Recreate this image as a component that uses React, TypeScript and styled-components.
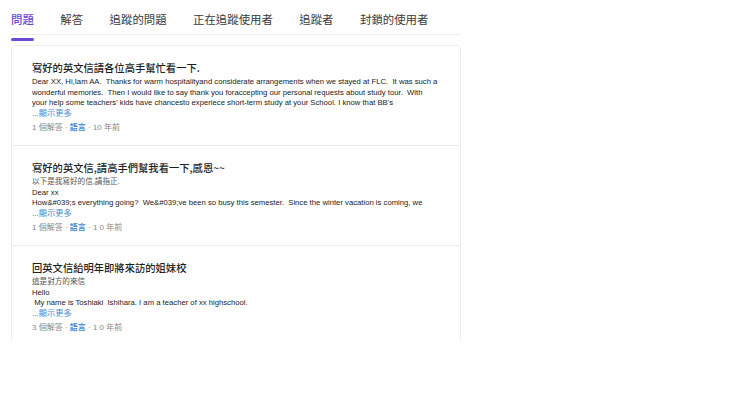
import React from "react";
import styled, { createGlobalStyle } from "styled-components";

const Global = createGlobalStyle`
  html, body { margin: 0; padding: 0; background: #fff; }
  body { font-family: "Liberation Sans", Arial, "Noto Sans CJK TC", sans-serif; }
`;

const Page = styled.div`
  width: 450px;
  padding: 10px 0 0 11px;
`;

const Tabs = styled.nav`
  display: flex;
  gap: 26.5px;
  border-bottom: 1px solid #eceef2;
  height: 24px;
`;

const Tab = styled.div<{ $active?: boolean }>`
  position: relative;
  font-family: "Noto Sans CJK TC", sans-serif;
  font-size: 11.4px;
  line-height: 18px;
  color: ${(p) => (p.$active ? "#6b4bd6" : "#3a3a3a")};
  font-weight: ${(p) => (p.$active ? 500 : 400)};
  &::after {
    content: "";
    display: ${(p) => (p.$active ? "block" : "none")};
    position: absolute;
    left: 0;
    right: 0;
    bottom: -7px;
    height: 3px;
    border-radius: 2px;
    background: #6b4bd6;
  }
`;

const Card = styled.section`
  margin-top: 10px;
  height: 295px;
  overflow: hidden;
  border: 1px solid #ececec;
  border-bottom: none;
  border-radius: 5px 5px 0 0;
`;

const Item = styled.article`
  padding: 14px 12px 0 20px;
  height: 100px;
  border-bottom: 1px solid #ececec;
  box-sizing: border-box;
`;

const Title = styled.h3`
  margin: 0 0 1px;
  font-family: "Noto Sans CJK TC", sans-serif;
  font-size: 10.3px;
  line-height: 16px;
  font-weight: 500;
  color: #1f1f1f;
`;

const Body = styled.div`
  font-family: "Liberation Sans", Arial, "Noto Sans CJK TC", sans-serif;
  font-size: 7.7px;
  line-height: 10.5px;
  color: #222;
  white-space: pre;
`;

const CjkLine = styled.span`
  font-size: 7.6px;
  color: #555;
`;

const More = styled.a`
  display: block;
  font-size: 8.2px;
  line-height: 10.4px;
  color: #4a8ad0;
  text-decoration: none;
  font-family: "Liberation Sans", "Noto Sans CJK TC", sans-serif;
`;

const Meta = styled.div`
  margin-top: 3px;
  font-family: "Liberation Sans", "Noto Sans CJK TC", sans-serif;
  font-size: 8px;
  line-height: 12px;
  color: #8a8a8a;
`;

const Lang = styled.span`
  color: #4a8ad0;
  font-weight: 700;
`;

type Q = {
  title: string;
  cjk?: string;
  body: string;
  answers: string;
  ago: string;
};

const items: Q[] = [
  {
    title: "寫好的英文信請各位高手幫忙看一下.",
    body:
      "Dear XX, Hi,Iam AA.  Thanks for warm hospitalityand considerate arrangements when we stayed at FLC.  It was such a\nwonderful memories.  Then I would like to say thank you foraccepting our personal requests about study tour.  With\nyour help some teachers' kids have chancesto experiece short-term study at your School. I know that BB's",
    answers: "1 個解答",
    ago: "10 年前",
  },
  {
    title: "寫好的英文信,請高手們幫我看一下,感恩~~",
    cjk: "以下是我寫好的信,請指正.",
    body:
      "Dear xx\nHow&#039;s everything going?  We&#039;ve been so busy this semester.  Since the winter vacation is coming, we",
    answers: "1 個解答",
    ago: "1 0 年前",
  },
  {
    title: "回英文信給明年即將來訪的姐妹校",
    cjk: "這是對方的來信",
    body: "Hello\n My name is Toshiaki  Ishihara. I am a teacher of xx highschool.",
    answers: "3 個解答",
    ago: "1 0 年前",
  },
];

const tabs = ["問題", "解答", "追蹤的問題", "正在追蹤使用者", "追蹤者", "封鎖的使用者"];

export default function App() {
  return (
    <Page>
      <Global />
      <Tabs>
        {tabs.map((t, i) => (
          <Tab key={t} $active={i === 0}>
            {t}
          </Tab>
        ))}
      </Tabs>
      <Card>
        {items.map((q) => (
          <Item key={q.title}>
            <Title>{q.title}</Title>
            <Body>
              {q.cjk && (
                <>
                  <CjkLine>{q.cjk}</CjkLine>
                  {"\n"}
                </>
              )}
              {q.body}
            </Body>
            <More href="#">...顯示更多</More>
            <Meta>
              {q.answers} · <Lang>語言</Lang> · {q.ago}
            </Meta>
          </Item>
        ))}
      </Card>
    </Page>
  );
}
